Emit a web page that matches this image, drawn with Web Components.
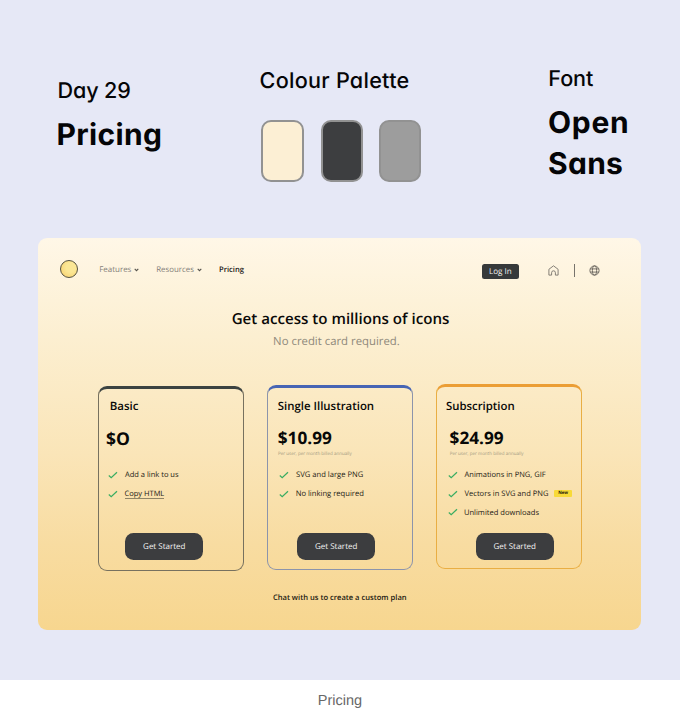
<!DOCTYPE html>
<html lang="en">
<head>
<meta charset="utf-8">
<title>Pricing</title>
<style>
html,body{margin:0;padding:0;background:#fff}
</style>
</head>
<body>
<pricing-shot></pricing-shot>
<script>
const define=(name,css,html,init)=>customElements.define(name,class extends HTMLElement{
  connectedCallback(){
    if(this.shadowRoot)return;
    const r=this.attachShadow({mode:'open'});
    r.innerHTML='<style>*{box-sizing:border-box}'+css+'</style>'+(typeof html==='function'?html(this):html);
    if(init)init(this,r);
  }
});
const ctx=document.createElement('canvas').getContext('2d');

/* One line of text whose glyphs span exactly `w` pixels.
   With `size` the tracking adapts; without it the font size does. */
define('fit-line',':host{display:block;white-space:nowrap;text-rendering:geometricPrecision;flex:none}','<slot></slot>',el=>{
  const cs=getComputedStyle(el),t=el.textContent,w=+el.getAttribute('w'),given=+el.getAttribute('size');
  ctx.font=`${cs.fontWeight} 200px ${cs.fontFamily}`;
  const m=ctx.measureText(t),left=-m.actualBoundingBoxLeft/200,ink=(m.actualBoundingBoxRight+m.actualBoundingBoxLeft)/200;
  const size=given||w/ink;
  el.style.fontSize=size+'px';
  el.style.width=w+'px';
  el.style.textIndent=-left*size+'px';
  if(given)el.style.letterSpacing=(w-ink*size)/(t.length-1)+'px';
});

define('colour-swatch',':host{display:block;box-sizing:border-box;width:43px;height:62px;border:2.5px solid #929292;border-radius:10px;background:var(--fill)}:host(:nth-child(n+2)){width:42px}','');
define('down-chevron',':host{display:block;width:5px;height:4px}svg{display:block}','<svg width="5" height="4" viewBox="0 0 5 4"><path d="M.7 .9 2.5 2.7 4.3 .9" fill="none" stroke="#55524c" stroke-width="1.1"/></svg>');
define('check-mark',':host{display:block;width:10px;height:8px}svg{display:block}','<svg width="10" height="8" viewBox="0 0 10 8"><path d="M.8 4.5 3.2 6.7 9 1.3" fill="none" stroke="#39ad62" stroke-width="1.25"/></svg>');
define('home-icon',':host{display:block;width:11px;height:11px}svg{display:block}','<svg width="11" height="11" viewBox="0 0 11 11"><path d="M.9 4.3 5.5.8l4.6 3.5v5.8H7.4V7.7a1.9 1.9 0 0 0-3.8 0v2.4H.9z" fill="none" stroke="#77736b" stroke-width=".9" stroke-linejoin="round"/></svg>');
define('globe-icon',':host{display:block;width:11px;height:11px}svg{display:block}','<svg width="11" height="11" viewBox="0 0 11 11" fill="none" stroke="#66625b" stroke-width=".9"><circle cx="5.5" cy="5.5" r="4.6"/><ellipse cx="5.5" cy="5.5" rx="2.1" ry="4.6"/><path d="M1.2 3.9h8.6M1.2 7.1h8.6"/></svg>');
define('start-button',':host{display:flex;justify-content:center;width:78px;height:27px;border-radius:8.5px;background:#3c3d3f;color:#f3f3f3;line-height:27px;font-weight:500;flex:none}','<fit-line w="41.3">Get Started</fit-line>');
define('plan-feature',':host{display:flex;height:18.8px;line-height:18.8px;color:#1c1a14}check-mark{margin:4.8px 6.9px 0 0}.new{margin:5px 0 0 6.3px;width:18px;height:7px;border-radius:1px;background:#f8da38;line-height:7px;padding-left:4.2px;font-weight:700;color:#1e1b0a}.u{border-bottom:1px solid #8f8466;height:14.2px}',
 el=>`<check-mark></check-mark><fit-line class="${el.hasAttribute('link')?'u':''}" w="${el.getAttribute('w')}">${el.textContent}</fit-line>${el.hasAttribute('fresh')?'<span class="new"><fit-line w="9.6">New</fit-line></span>':''}`);

define('plan-card',`:host{display:flex;flex-direction:column;box-sizing:border-box;width:146px;height:185px;border:1px solid var(--line);border-top:3.5px solid var(--top);border-radius:9px;flex:none;color:#080807}
 .title{line-height:16px;font-weight:600;margin-left:var(--title-x)}
 .price{line-height:24px;font-weight:700;margin:12px 0 0 var(--price-x)}
 .note{height:6px;line-height:6px;color:#a29980;margin-left:var(--price-x)}
 .list{height:56.4px;margin:9.3px 0 0 var(--list-x)}
 start-button{margin:10.4px 0 0 var(--btn-x)}`,
 el=>{const a=n=>el.getAttribute(n);return `<fit-line class="title" w="${a('tw')}">${a('name')}</fit-line><fit-line class="price" w="${a('pw')}">${a('price')}</fit-line><div class="note">${el.hasAttribute('billed')?'<fit-line w="73.5">Per user, per month billed annually</fit-line>':''}</div><div class="list"><slot></slot></div><start-button></start-button>`});

define('site-nav',`:host{display:flex;height:30px;padding:0 41px 0 22px;line-height:12px;color:#85817a}
 .logo{width:18px;height:18px;margin-top:6px;border:1px solid #55523f;border-radius:50%;background:radial-gradient(circle at 62% 40%,#fbe795 35%,#f6cc67)}
 fit-line{margin-top:10px}down-chevron{margin-top:13.6px}
 .now{color:#191816;font-weight:600}
 .login{width:37.5px;height:15px;margin:10px 0 0 auto;padding-left:8.1px;border-radius:2.5px;background:#36393a;color:#f2f2ef;font-weight:500;line-height:15px}
 .login fit-line{margin:0}home-icon{margin:11px 0 0 29.3px}.bar{width:1.5px;height:13.5px;background:#77736c;margin:9.6px 0 0 14.2px}globe-icon{margin:11px 0 0 14.3px}`,
 `<div class="logo"></div><fit-line style="margin-left:21.6px" w="31.1">Features</fit-line><down-chevron style="margin-left:3.2px"></down-chevron><fit-line style="margin-left:17.7px" w="36.7">Resources</fit-line><down-chevron style="margin-left:3.3px"></down-chevron><fit-line class="now" style="margin-left:17.7px" w="24.3">Pricing</fit-line><div class="login"><fit-line w="21.4">Log In</fit-line></div><home-icon></home-icon><div class="bar"></div><globe-icon></globe-icon>`);

define('pricing-panel',`:host{display:flex;flex-direction:column;box-sizing:border-box;width:603px;height:392px;margin-left:38.4px;padding-top:16px;border-radius:9px;background:linear-gradient(#fff7e7 0%,#fcefd1 25%,#fae5b8 55%,#f8dca1 78%,#f7d68f 100%);font-family:"Open Sans","Noto Sans",sans-serif}
 h1,p{margin:0;font-weight:inherit}
 h1{font-weight:600;line-height:22px;margin:24px 0 0 194.1px;color:#0a0908}
 .sub{line-height:18px;margin:2.8px 0 0 235.8px;color:#8f897b}
 .plans{display:flex;gap:22.7px;margin:33.7px 0 0 59.8px;height:188px;align-items:flex-start;flex:none}
 .basic{--line:#77715f;--top:#3c4341;--title-x:11.6px;--price-x:7.4px;--list-x:8.8px;--btn-x:26px;margin-top:2px;padding-top:9.2px}
 .single{--line:#8c94ab;--top:#4765b4;--title-x:10.4px;--price-x:10.6px;--list-x:11.6px;--btn-x:29.2px;margin-top:.8px;padding-top:10.4px}
 .subs{--line:#e9ae43;--top:#eb9e35;--title-x:9.9px;--price-x:13.7px;--list-x:11.1px;--btn-x:39px;padding-top:11.2px}
 .chat{line-height:14px;font-weight:600;margin:18.5px 0 0 234.9px;color:#1b1811}`,
 `<site-nav></site-nav><h1><fit-line w="216.5">Get access to millions of icons</fit-line></h1><p class="sub"><fit-line w="124.8">No credit card required.</fit-line></p>
 <div class="plans">
 <plan-card class="basic" name="Basic" tw="27.3" price="$O" pw="22.3"><plan-feature w="53.5">Add a link to us</plan-feature><plan-feature link w="39.3">Copy HTML</plan-feature></plan-card>
 <plan-card class="single" name="Single Illustration" tw="95" price="$10.99" pw="52.8" billed><plan-feature w="66.5">SVG and large PNG</plan-feature><plan-feature w="67">No linking required</plan-feature></plan-card>
 <plan-card class="subs" name="Subscription" tw="67.4" price="$24.99" pw="52.8" billed><plan-feature w="81.2">Animations in PNG, GIF</plan-feature><plan-feature fresh w="83.5">Vectors in SVG and PNG</plan-feature><plan-feature w="74.3">Unlimited downloads</plan-feature></plan-card>
 </div><p class="chat"><fit-line w="133">Chat with us to create a custom plan</fit-line></p>`);

define('design-notes',`:host{display:grid;grid-template-columns:202px 288px 1fr;height:238px;padding-left:58px;box-sizing:border-box;font-family:Inter,sans-serif;font-feature-settings:"cv11";color:#050507}
 .label{line-height:28px;font-weight:450}.big{line-height:40.5px;font-weight:700}
 .row{display:flex;gap:16.5px;margin:25.5px 0 0 1px}`,
 `<section style="padding-top:76.8px"><fit-line class="label" style="margin-left:1.3px" size="21.6" w="69">Day 29</fit-line><fit-line class="big" style="margin:10.6px 0 0 .5px" size="30" w="101.5">Pricing</fit-line></section>
 <section style="padding-top:66.5px"><fit-line class="label" style="font-weight:500;margin-left:.8px" size="21.6" w="146.5">Colour Palette</fit-line><div class="row"><colour-swatch style="--fill:#fcefd4"></colour-swatch><colour-swatch style="--fill:#3d3e40"></colour-swatch><colour-swatch style="--fill:#9d9d9d"></colour-swatch></div></section>
 <section style="padding-top:64.5px"><fit-line class="label" style="margin-left:2px" size="21.6" w="43">Font</fit-line><div style="margin:10.6px 0 0 1.3px"><fit-line class="big" size="30" w="77.5">Open</fit-line><fit-line class="big" size="30" w="71">Sans</fit-line></div></section>`);

define('pricing-shot',`:host{display:block;width:680px;height:710px;overflow:hidden;background:#fff}
 .board{height:679.5px;background:#e6e8f6}
 .caption{font-family:"Liberation Sans",sans-serif;line-height:20px;color:#686868;padding:11px 0 0 319px}`,
 `<div class="board"><design-notes></design-notes><pricing-panel></pricing-panel></div><div class="caption"><fit-line w="42.3">Pricing</fit-line></div>`);
</script>
</body>
</html>
